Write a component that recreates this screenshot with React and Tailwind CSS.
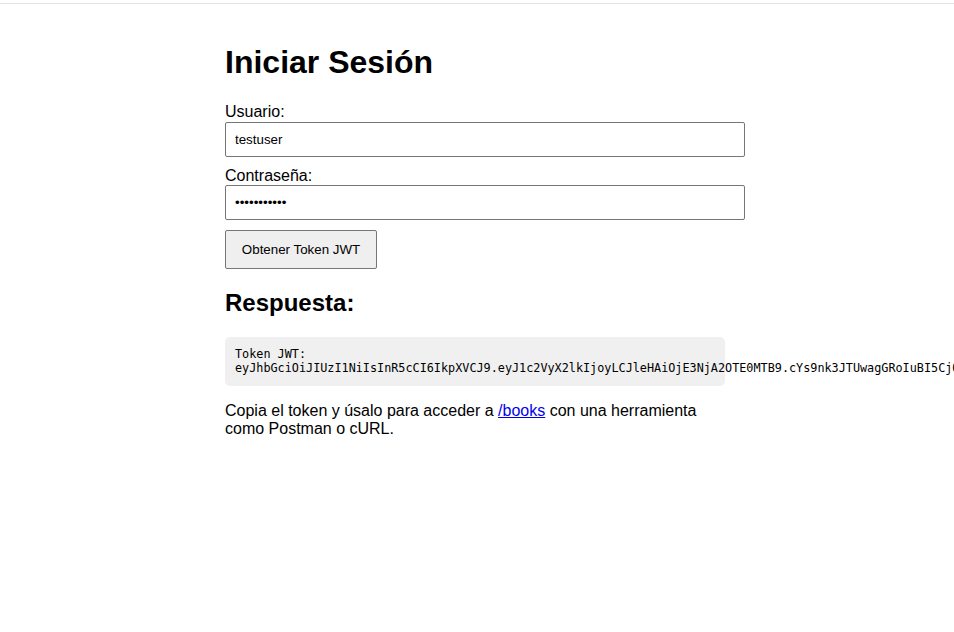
import React, { useState } from "react";

const TOKEN =
  "eyJhbGciOiJIUzI1NiIsInR5cCI6IkpXVCJ9.eyJ1c2VyX2lkIjoyLCJleHAiOjE3NjA2OTE0MTB9.cYs9nk3JTUwagGRoIuBI5CjQp2m8XvL0kdW7aZrT3sE";

export default function App() {
  const [user, setUser] = useState("testuser");
  const [pass, setPass] = useState("password123");

  return (
    <div
      className="min-h-screen overflow-hidden bg-white text-black"
      style={{ fontFamily: '"Liberation Sans", Arial, sans-serif' }}
    >
      <div className="h-[3px]" />
      <div className="border-t border-[#e3e3e3]" />

      <div className="w-[500px] ml-[225px] pt-[40px]">
        <h1 className="text-[32px] font-bold leading-[37px] mb-[22px]">Iniciar Sesión</h1>

        <form onSubmit={(e) => e.preventDefault()}>
          <label className="block text-[16px] leading-[18.5px]">Usuario:</label>
          <input
            type="text"
            value={user}
            onChange={(e) => setUser(e.target.value)}
            className="block w-[520px] h-[35px] px-[9px] mb-[10px] border border-[#767676] rounded-[2px] text-[13.33px] outline-none"
          />

          <label className="block text-[16px] leading-[18.5px]">Contraseña:</label>
          <input
            type="password"
            value={pass}
            onChange={(e) => setPass(e.target.value)}
            className="block w-[520px] h-[35px] px-[9px] mb-[10px] border border-[#767676] rounded-[2px] text-[13.33px] outline-none"
          />

          <button
            type="submit"
            className="h-[39px] w-[152px] bg-[#efefef] border border-[#767676] rounded-[2px] text-[13.33px]"
          >
            Obtener Token JWT
          </button>
        </form>

        <h2 className="text-[24px] font-bold leading-[27.5px] mt-[20px] mb-[20px]">Respuesta:</h2>

        <pre
          className="bg-[#f0f0f0] rounded-[5px] p-[10px] text-[11.8px] leading-[14.5px] whitespace-pre"
          style={{ fontFamily: '"DejaVu Sans Mono", "Liberation Mono", monospace' }}
        >
          {"Token JWT:\n" + TOKEN}
        </pre>

        <p className="mt-[16px] text-[16px] leading-[18.5px]">
          Copia el token y úsalo para acceder a{" "}
          <a href="#" className="text-[#0000ee] underline">/books</a> con una herramienta
          como Postman o cURL.
        </p>
      </div>
    </div>
  );
}
